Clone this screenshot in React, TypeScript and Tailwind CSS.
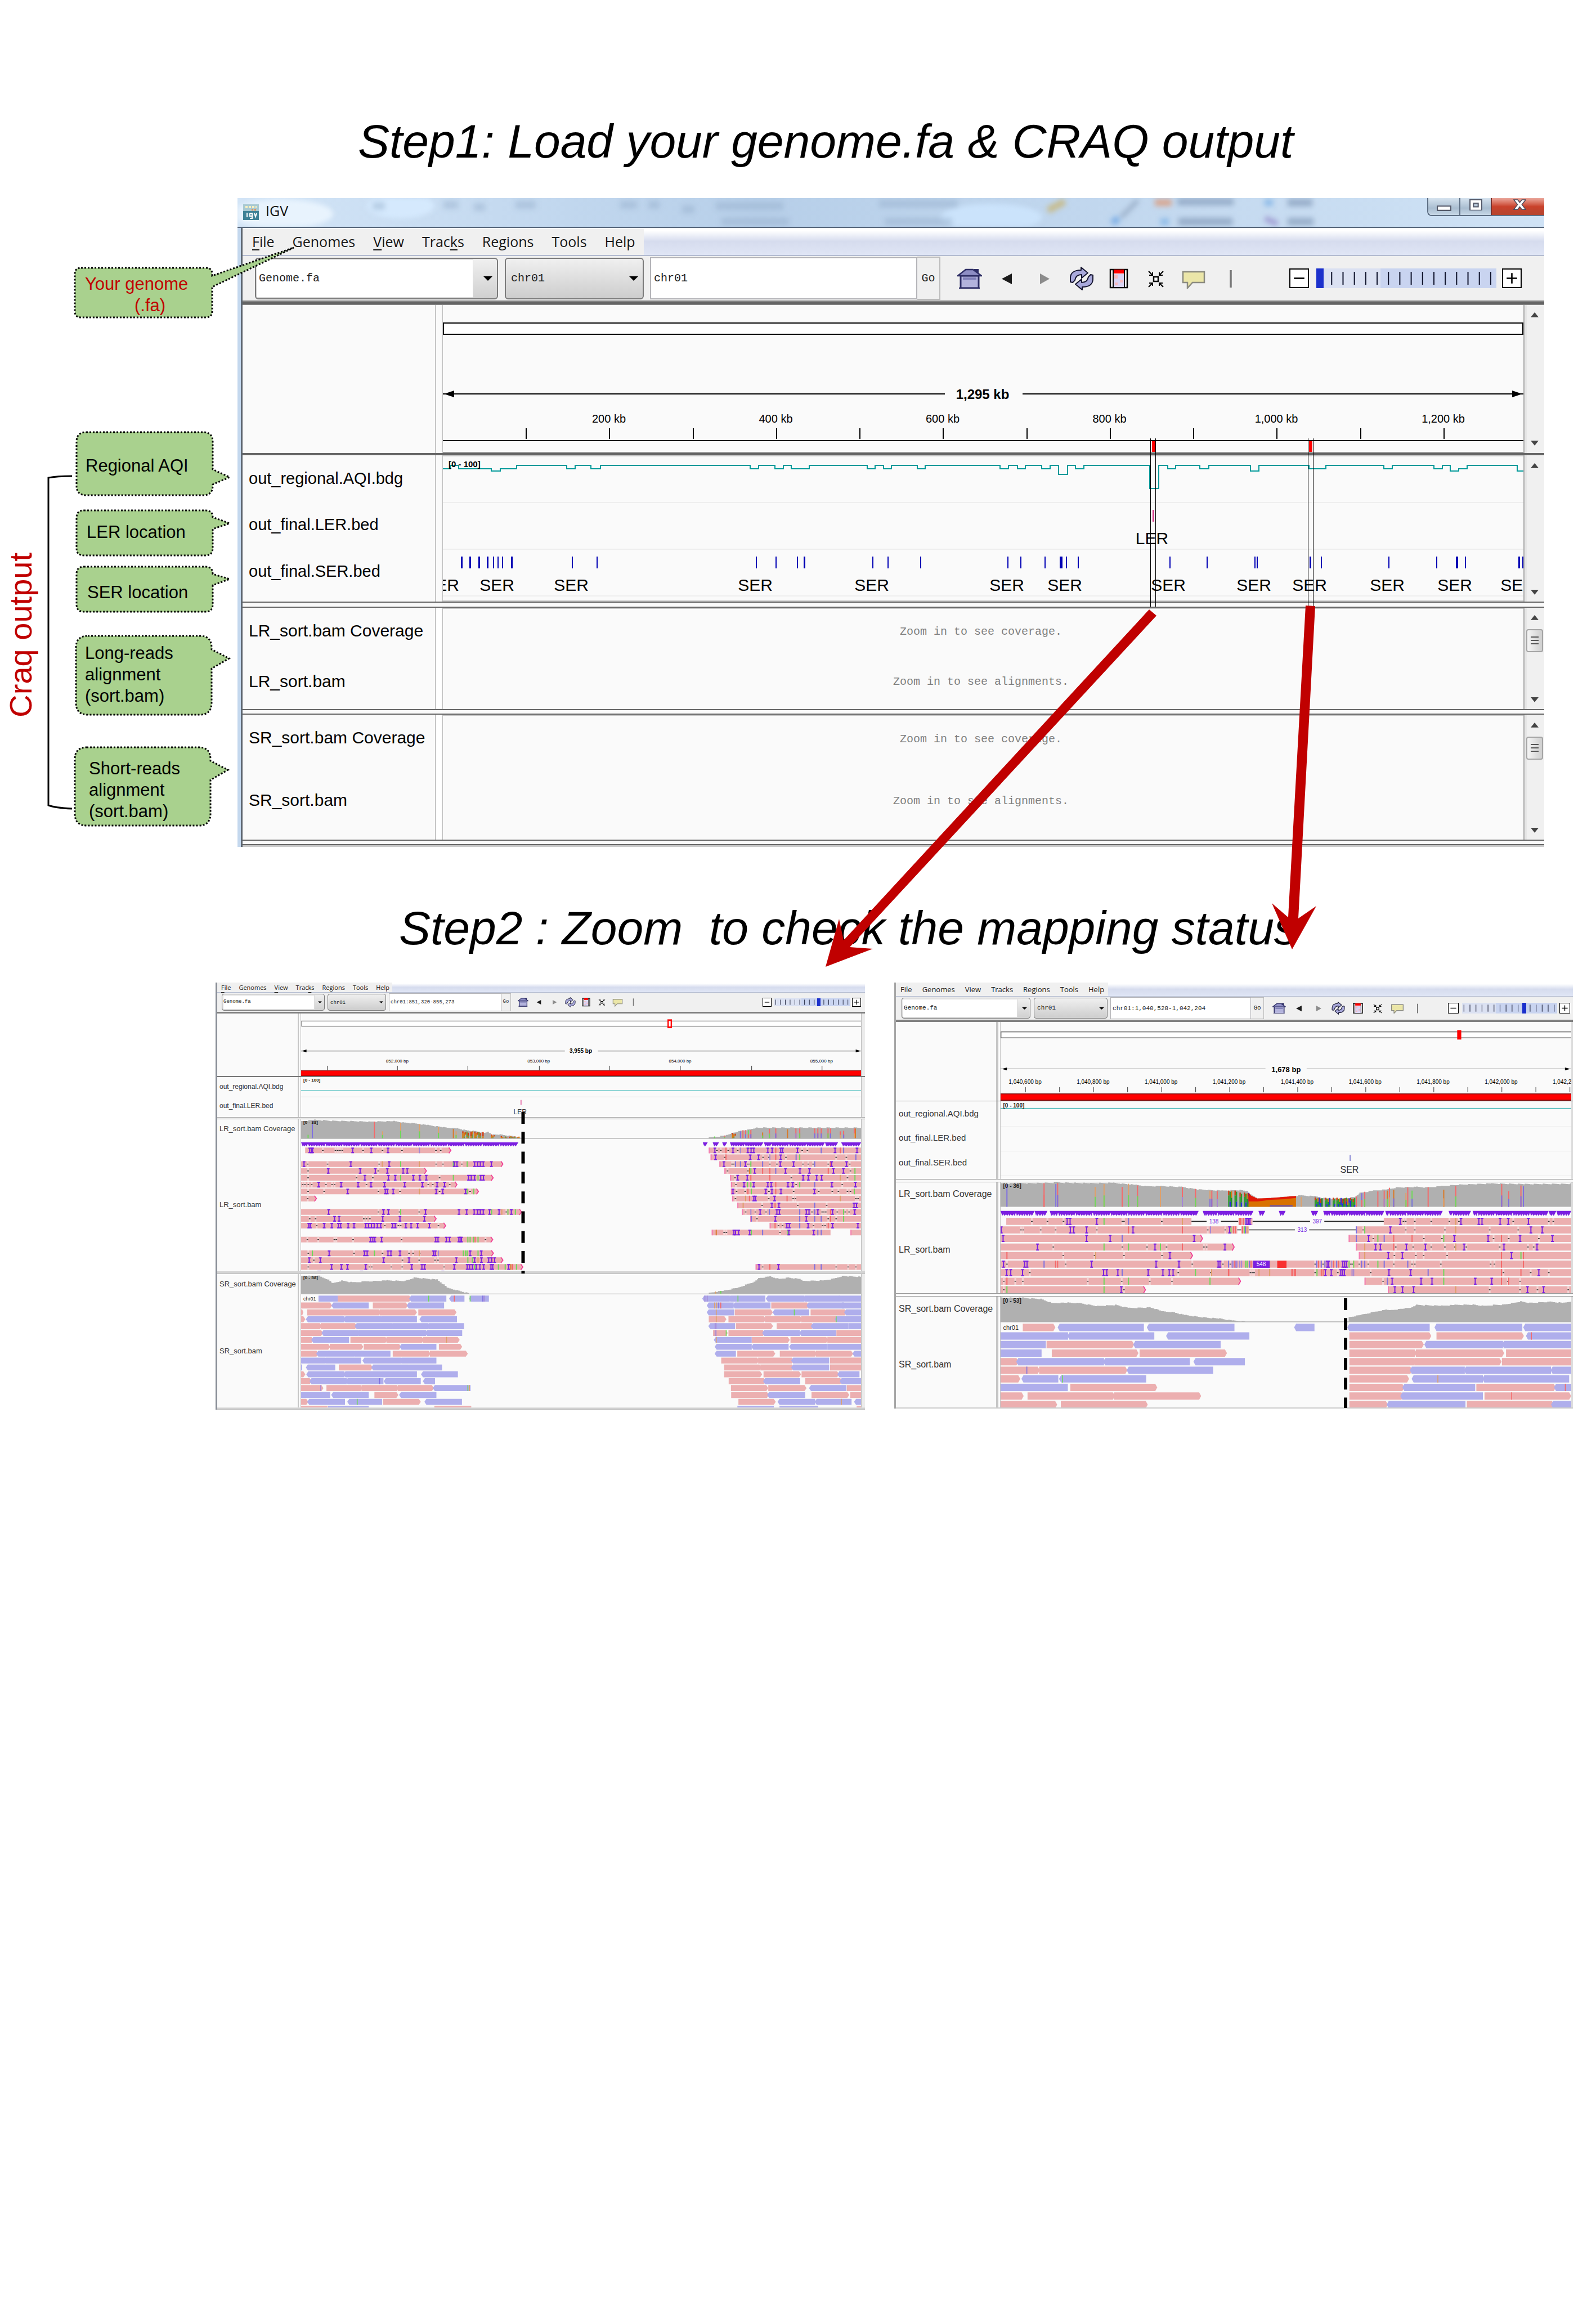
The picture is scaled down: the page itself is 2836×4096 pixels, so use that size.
import type { ReactNode } from "react";

type Read = {
  y: number;
  a: number;
  b: number;
  ins: number[];
  gaps: number[];
  marks: [string, number][];
  tip: "right" | "left" | "none";
};
type Frame = { x0: number; x1: number; y0: number; y1: number };

const PINK = "#ecafb0";
const BLUE = "#afaeec";
const INS = "#7b1fe0";
const MARK: Record<string, string> = {
  g: "#6fd85a",
  r: "#f46a6a",
  b: "#7f70e0",
  t: "#dfa06a",
  p: "#a487d6",
  o: "#d87a2a",
};
const HARD = ["#d63a10", "#2f9a2f", "#d87a10", "#2a30d8", "#c8381c", "#1f8f2a"];
const WARM = ["#d63a10", "#d87a10", "#c8501c", "#6f9a3f", "#d63a10", "#b0b0b0"];

/* ---------- read notation: "start-end tip | insertions | gaps | marks" ---------- */
function reads(off: number, rows: [number, string][]): Read[] {
  return rows.map(([y, s]) => {
    const [range, ins = "", gaps = "", marks = ""] = s.split("|").map((t) => t.trim());
    const [span, tip = ">"] = range.split(" ");
    const [a, b] = span.split("-").map(Number);
    const nums = (t: string) => (t ? t.split(" ").map((n) => Number(n) + off) : []);
    return {
      y,
      a: a + off,
      b: b + off,
      ins: nums(ins),
      gaps: nums(gaps),
      marks: marks ? marks.split(" ").map((m) => [m[0], Number(m.slice(1)) + off] as [string, number]) : [],
      tip: tip === ">" ? "right" : tip === "<" ? "left" : "none",
    };
  });
}

const A_OFF = 1442.6;
const B_OFF = 1489.6;

const longA: Read[] = [
  ...reads(0, [
    [627, "441-1085 > | 461 469 474 651 733 807 | 519 575 585 595 605 697 783 869 1019 1040 | p946"],
    [675, "423-1315 > | 436 643 812 1100 1112 1190 1203 1215 1228 1264 | 452 540 768 1020 1050 1133 | t782 g863 t946 g1096 g1157"],
    [699, "423-977 > | 543 684 751 804 874 892 | 454 764"],
    [723, "423-1272 > | 705 809 839 919 948 976 1163 1175 1190 1217 1229 | 454 668 740 1035 | g863 t946 g1096 g1205"],
    [747, "423-1112 > | 501 600 675 732 792 881 959 1024 1057 | 430 440 455 470 533 560 571 712 985 1005 1080"],
    [771, "423-1207 > | 629 795 804 830 1020 1049 1150 | 454 525 765 860 1035 1170 | t946 g1157 g1186"],
    [796, "423-491 > | | 452"],
    [843, "423-1397 > | 545 787 809 973 1121 1155 1188 1203 1215 1228 1256 1298 1352 | 765 858 945 1330 | g863 g1265 t1310 g1337 g1370"],
    [867, "423-1020 > | 571 591 784 860 968 | 461 487 700 712 727"],
    [891, "423-1062 > | 457 464 525 559 588 598 631 657 709 721 734 746 760 775 827 839 886 909 938 990 | 492 793 853 863 1030"],
    [940, "423-1270 > | 730 740 749 779 1018 1028 1065 1079 1120 1126 1132 | 451 499 570 579 653 867 1238 | g1160 g1170 g1185 r1192 g1205"],
    [988, "423-1273 > | 547 703 715 807 820 860 1008 1016 1170 1219 | 455 657 783 900 918 947 | g473 g747 t946 p1030 g1140 g1150 g1157 g1205"],
    [1012, "423-1315 > | 459 508 788 900 1109 1190 1220 1252 1264 1278 | 479 871 945 1015 1028 | g1160 g1180 t1205 r1267"],
    [1036, "423-1403 > | 558 601 628 709 912 957 969 1100 1157 1168 1180 1197 1213 1230 1262 1270 1340 | 455 725 735 822 870 1055 | g1190 g1295 g1325 o1350 r1358 g1375"],
  ]),
  ...reads(A_OFF, [
    [627, "782-1455 < | 809 889 955 969 981 1043 1062 1100 1108 1174 1340 1437 | 818 835 868 910 1195 1218 | r858 p922 r1078 b1279 r1363 b1378"],
    [651, "790-1455 < | 812 965 1002 1100 | 852 1022 1048 1123 1345 1390 | r858 p1052 r1078 b1168 g1184 b1432"],
    [675, "829-1455 < | 849 944 1098 1157 1325 1391 | 885 892 955 965 1052 1083 1198 1222 1243 1310 1405 | b900 b922 g968 b1020 b1250 r1320"],
    [699, "851-1455 < | 985 1121 1185 1227 1333 1377 | 865 955 1408 | o962 g968 r1020 r1052 b1078 r1310 g1428"],
    [723, "876-1455 < | 910 952 1199 1222 1259 1281 | 898 1147 1395 | r968 r1052 t1363 g1428"],
    [747, "880-1455 < | 938 981 1043 1058 1132 1153 1326 1430 | 902 1168 1372 | g953 g968 r1078 g1184 b1250"],
    [771, "880-1455 < | 889 1034 1061 1101 1249 | 905 943 1048 1157 1268 1328 1355 1395 1408 | r955 g970 r1078 g1425"],
    [796, "885-1455 < | 981 988 1073 | 900 1047 1155 1165 1432 1442 | t945 r962 r1128 t1363"],
    [820, "908-1455 < | 1061 1092 1424 1435 | 1018 1175 1303 | t934 r1075 b1250"],
    [843, "928-1455 < | 1009 1083 1094 1213 1225 1264 1329 1427 | 945 988 1035 1238 1283 1291 1299 1350 1385 1402 | p968 b1050 b1184 b1250 r1320 g1378"],
    [867, "965-1455 < | 1076 1213 | 995 1310 1345 | b970 b1184 b1250 b1279 r1320 g1378"],
    [891, "1051-1455 < | 1127 1138 1221 1329 1441 | 1090 1108 1245 1285 1296 | r1075 b1184 r1310"],
    [915, "795-1320 < | 893 900 914 963 1136 1246 | 850 860 1097 | o815 g970 b1020 g1132 b1264 b1279"],
    [915, "1408-1455 <"],
    [1036, "989-1455 < | 1004 1090 | 1020 1345 1398 1432 | r1052 b1250 b1279"],
  ]),
];

const longB: Read[] = [
  ...reads(0, [
    [876, "530-1348 - | 799 812 930 | 643 712 783 1043 1050 1217 | g962 b1070 t1308"],
    [906, "505-1550 - | 508 813 828 885 1090 1515 | 595 605 682 748 930 1420 1498 | r1070 r1308 p1432 g1520 r1540"],
    [936, "505-1397 > | 516 885 989 1360 | | b1042"],
    [966, "505-1537 > | 668 1187 1496 | 738 1043 1152 1238 1403 1415 | g962 g1070 g1211 r1308"],
    [996, "505-1353 > | 1253 | 782 920 1050 1218 | r533 t924"],
    [1026, "505-3026 - | 518 611 622 907 1192 1293 1466 1474 | 533 792 1352 1487 1520 | b697 r748 r757 b1512 p1528 p1543 p1549"],
    [1056, "505-3026 - | 532 550 602 960 974 1023 1157 1222 1250 1267 | 634 1290 1434 | b1042 g1366 t1437 r1513"],
    [1086, "505-1565 > | | 519 570 603 890 1040 1164 1262 | r533 g962 g1070 g1430"],
    [1116, "505-1145 > | 1038 | 519 1050 | g533 g962"],
  ]),
  ...reads(B_OFF, [
    [876, "66-128 - | 103 110 117 | | r72 r76 r88 b97"],
    [876, "708-1536 - | 781 1049 1128 1142 1222 1258 1347 | 795 805 845 918 998 1040 1280 1437 1457 | t1026"],
    [906, "0-60 - | 27 | 8 | g33 r44 r52"],
    [906, "78-112 - | | | r84 g92 b97 t104"],
    [906, "585-1536 - | 737 1358 1408 | 617 805 845 978 1176 1302 | b587 g624 t1026"],
    [936, "553-1536 < | 641 1020 1169 1310 1453 | 662 885 965 1193 1260 1393 | b587 g682 b710 r752 r833 g973 r1228"],
    [966, "585-1536 < | 672 693 808 892 1063 1239 1385 | 761 838 918 978 1022 1073 1220 1345 1370 | t624 r752 t1026"],
    [996, "598-1536 < | 728 790 1272 | 755 850 884 988 | t624 r1228 g1314 r1325"],
    [1026, "0-1 - | 458 465 527 535 543 | 405 440 562 568 600 640 752 833 845 960 1180 1197 | p42 r50 p57 p72 p80 g98 g105 b115 r122 t204 b412 r420 b432 b448 r487 p478 b500 r508 g555 g575 b610 b624 g682 b710 b814 r1228 r1325"],
    [1056, "0-1 - | 450 476 518 526 534 731 827 1393 | 119 127 135 405 505 650 1237 1357 1437 | r22 t157 t204 r302 r306 r314 r318 g413 r432 r440 p568 p575 b904 g973 r1228 r1314"],
    [1086, "623-1536 < | 745 873 921 1112 1185 | 705 1256 1310 | b724 g973 r1228 r1260"],
    [1116, "726-1536 < | 757 791 840 1343 1414 | 1176 1310 1387 1523 | t1026"],
  ]),
];

/* ---------- short reads: r = forward, b = reverse, m = coloured base ---------- */
const shortRows = (y0: number, step: number, rows: string[]) => rows.map((s, i) => [y0 + step * i, s] as [number, string]);

const shortALeft = shortRows(1147, 24.15, [
  "f500-585 r585-910 b900-1065 b1077-1145 b1165-1253 mg987 mr1100 mg1170 mb1226 mp1232",
  "r423-560 b557-722 r740-895 b890-1055",
  "r423-433 r450-620 r612-776 r770-935 r941-1110",
  "r423-442 b444-615 b610-776 b768-935 b946-1112",
  "r423-515 r510-670 b660-826 b818-985 b978-1143",
  "r423-520 b513-678 b670-815 b805-975 b970-1135",
  "r423-478 b468-635 r641-805 r800-965 r960-1124 mt1066",
  "r423-552 r550-698 r700-865 b858-1021 r1032-1135",
  "r423-500 b490-660 b652-818 r828-995 r992-1160",
  "b415-530 b522-688 b694-865 b858-1021",
  "f423-428 b444-574 r590-740 b733-900 b892-1046",
  "r423-442 b446-615 b610-776 b768-935 b953-1116",
  "r423-470 b460-625 b620-787 b788-952 b961-1015 mb770",
  "r423-522 r535-695 r690-855 r850-1010 b1005-1172 mp510 mg1160 mt1167",
  "f423-552 b556-722 r747-853 b856-1021",
  "r423-455 b450-617 b627-781 r785-952 b968-1134 mg671",
]);
const shortARight = shortRows(1147, 24.15, [
  "b753-875 b868-1032 b1034-1205 b1198-1360 f1357-1455 mp765 mp775 mg911",
  "b773-892 b888-1055 r1058-1225 b1214-1380 f1370-1455 mt808 mt817 mb826 mr835",
  "b773-894 r897-1065 b1064-1226 r1232-1392 b1380-1455 mg1160 mt815",
  "r782-860 r869-1035 r1030-1195 r1190-1352 b1338-1455 mt815 mg1345",
  "b780-898 r902-1066 r1082-1246 b1233-1400 f1402-1455 mp810 mp814",
  "r801-866 r869-1030 b1018-1185 b1182-1345 f1345-1345 q1346-1455 mp810 mp814 mg859",
  "b804-972 r972-1140 r1143-1310 q1306-1455 mt815",
  "b808-972 b970-1135 b1137-1305 f1306-1455",
  "b808-902 r908-1076 r1096-1260 r1255-1420 b1417-1455",
  "r837-1005 r1000-1158 b1146-1314 q1318-1455",
  "r850-1015 r1010-1158 b1146-1314 q1318-1455",
  "r850-1018 r1024-1190 r1192-1358 b1350-1448",
  "r870-1035 b1022-1186 r1208-1372 b1360-1455",
  "r880-1045 r1045-1214 b1225-1390 q1392-1455",
  "r881-1048 b1040-1208 r1236-1403 q1407-1455",
  "r913-1078 b1086-1252 b1250-1413 b1424-1455 mt1368",
]);
const shortBLeft = shortRows(1248, 30.1, [
  "r603-747 b757-1138 b1151-1538",
  "f505-803 b800-1184 b1236-1604",
  "f505-705 r708-1095 b1091-1477",
  "f505-686 r731-1114 r1119-1505",
  "r505-584 b574-962 b958-1341 b1357-1584",
  "r505-678 r675-1065 b1062-1444 mb621",
  "r505-592 b597-760 b763-1148 mg778",
  "f505-802 r813-1197",
  "r505-607 r624-1010 r1006-1391",
  "r505-755 r771-1155",
]);
const shortBRight = shortRows(1248, 30.1, [
  "b312-402 b547-911 b932-1320 b1324-1536",
  "r556-918 r941-1327 b1336-1536 mr1360",
  "r556-885 b887-1235 b1230-1536",
  "r556-854 r850-1240 q1248-1536",
  "r556-850 r843-1228 q1230-1536",
  "r556-834 b823-1066 b1062-1447 b1445-1536",
  "r556-820 b831-1146 b1143-1527 mt947",
  "r556-799 b790-1112 r1117-1468 b1460-1536 mr1510",
  "r556-795 b781-1146 r1153-1536 mr1273",
  "r556-726 b721-1069 r1075-1460 b1447-1536",
]);

function LongReads({ data, h }: { data: Read[]; h: number }) {
  return (
    <g>
      {data.map((r, i) => {
        const t = r.y - h / 2;
        const w = Math.max(r.b - r.a, 0);
        const tipW = 9;
        return (
          <g key={i}>
            {w > 2 && r.tip === "right" && (
              <>
                <path d={`M${r.a} ${t}H${r.b - tipW}L${r.b} ${r.y}L${r.b - tipW} ${t + h}H${r.a}Z`} fill={PINK} />
                <path d={`M${r.b - tipW} ${t}L${r.b} ${r.y}L${r.b - tipW} ${t + h}`} fill="none" stroke="#f23d96" strokeWidth={4} />
              </>
            )}
            {w > 2 && r.tip !== "right" && <rect x={r.a} y={t} width={w} height={h} fill={PINK} />}
            {r.tip === "left" && <rect x={r.a} y={t} width={5} height={h} fill="#f57fb4" />}
            {r.gaps.map((x) => (
              <g key={x}>
                <rect x={x - 4} y={t} width={8} height={h} fill="#f3d3d3" />
                <rect x={x - 3.5} y={r.y - 1.5} width={7} height={3} fill="#333" />
              </g>
            ))}
            {r.marks.map(([c, x]) => (
              <rect key={c + x} x={x - 2.5} y={t} width={5} height={h} fill={MARK[c]} />
            ))}
            {r.ins.map((x) => (
              <path
                key={x}
                d={`M${x - 6} ${t}H${x + 6}V${t + 4}H${x + 2.5}V${t + h - 4}H${x + 6}V${t + h}H${x - 6}V${t + h - 4}H${x - 2.5}V${t + 4}H${x - 6}Z`}
                fill={INS}
              />
            ))}
          </g>
        );
      })}
    </g>
  );
}

function ShortReads({ rows, off, h }: { rows: [number, string][]; off: number; h: number }) {
  return (
    <g>
      {rows.map(([y, s]) =>
        s.split(" ").map((tok) => {
          const t = y - h / 2;
          if (tok[0] === "m") {
            const x = Number(tok.slice(2)) + off;
            return <rect key={y + tok} x={x - 2} y={t} width={4} height={h} fill={MARK[tok[1]]} />;
          }
          const [a, b] = tok.slice(1).split("-").map((n) => Number(n) + off);
          if (tok[0] === "f" || tok[0] === "q")
            return <rect key={y + tok} x={a} y={t} width={b - a} height={h} fill={tok[0] === "f" ? BLUE : PINK} />;
          const k = Math.min(9, (b - a) / 2);
          const d =
            tok[0] === "r"
              ? `M${a} ${t}H${b - k}L${b} ${y}L${b - k} ${t + h}H${a}Z`
              : `M${b} ${t}H${a + k}L${a} ${y}L${a + k} ${t + h}H${b}Z`;
          return <path key={y + tok} d={d} fill={tok[0] === "r" ? PINK : BLUE} />;
        }),
      )}
    </g>
  );
}

/* area with a stepped, slightly uneven crest */
function Coverage({ base, pts }: { base: number; pts: [number, number][] }) {
  let d = `M${pts[0][0]} ${base}`;
  for (let i = 0; i < pts.length - 1; i++) {
    const [xa, ya] = pts[i];
    const [xb, yb] = pts[i + 1];
    for (let x = xa; x < xb; x += 8) {
      const y = ya + ((yb - ya) * (x - xa)) / (xb - xa) + ((Math.round(x) * 7) % 5) * 0.6 - 1;
      d += `L${x} ${y.toFixed(1)}H${Math.min(x + 8, xb)}`;
    }
  }
  d += `V${base}Z`;
  return <path d={d} fill="#b0b0b0" />;
}

function Bars({ base, off = 0, items }: { base: number; off?: number; items: [number, number, string, string?][] }) {
  return (
    <g>
      {items.map(([x, top, c, c2]) => (
        <g key={x}>
          <rect x={x + off - 2.5} y={top} width={5} height={base - top} fill={MARK[c]} />
          {c2 && <rect x={x + off - 2.5} y={(top + base) / 2} width={5} height={(base - top) / 2} fill={MARK[c2]} />}
        </g>
      ))}
    </g>
  );
}

function Mix({ a, b, top, base, step = 6, tones = HARD }: { a: number; b: number; top: number; base: number; step?: number; tones?: string[] }) {
  const out: ReactNode[] = [];
  let i = 0;
  for (let x = a; x < b; x += step, i++) {
    const j = top + ((i * 5) % 7) * 0.8;
    const m = j + (base - j) * (0.3 + ((i * 3) % 5) * 0.12);
    out.push(<rect key={"u" + i} x={x} y={j} width={step} height={m - j} fill={tones[i % 6]} />);
    out.push(<rect key={"d" + i} x={x} y={m} width={step} height={base - m} fill={tones[(i * 2 + 1) % 6]} />);
  }
  return <g>{out}</g>;
}

function PurpleBand({ y, h, segs }: { y: number; h: number; segs: [number, number][] }) {
  return (
    <path
      fill={INS}
      d={segs
        .map(([a, b]) => {
          let d = `M${a} ${y}H${b}L${b - 6} ${y + h * 0.55}`;
          let x = b - 6;
          let k = 0;
          while (x > a + 14) {
            x -= 6;
            d += `L${x} ${y + h}`;
            x -= 4 + (k % 3);
            d += `L${x} ${y + h * (k % 7 === 6 ? 0.35 : 0.65)}`;
            k++;
          }
          return d + `L${(a + Math.min(b, a + 14)) / 2} ${y + h}Z`;
        })
        .join("")}
    />
  );
}

function Plot({ frame, children }: { frame: Frame; children: ReactNode }) {
  return (
    <svg
      className="absolute inset-0 h-full w-full"
      viewBox={`${frame.x0} ${frame.y0} ${frame.x1 - frame.x0} ${frame.y1 - frame.y0}`}
      preserveAspectRatio="none"
      aria-hidden="true"
    >
      {children}
    </svg>
  );
}

function At({ frame, x, y, className = "", start = false, children }: { frame: Frame; x: number; y: number; className?: string; start?: boolean; children: ReactNode }) {
  return (
    <span
      className={`absolute -translate-y-1/2 leading-none whitespace-nowrap ${start ? "" : "-translate-x-1/2"} ${className}`}
      style={{
        left: `${((x - frame.x0) / (frame.x1 - frame.x0)) * 100}%`,
        top: `${((y - frame.y0) / (frame.y1 - frame.y0)) * 100}%`,
      }}
    >
      {children}
    </span>
  );
}

/* ---------- toolbar icons ---------- */
const HomeIcon = () => (
  <svg viewBox="0 0 44 36" className="w-full" aria-hidden="true">
    <path d="M6 13H38V35H6Z" fill="#b3b3dc" stroke="#2f2f66" strokeWidth="3" />
    <path d="M10 16H34V20H10Z" fill="#8080b8" />
    <path d="M30 1H38V10H30Z" fill="#2f2f66" />
    <path d="M1 13L15 2H28L43 13Z" fill="#8e8ec4" stroke="#2f2f66" strokeWidth="2.5" />
    <path d="M3 35H40" stroke="#2f2f66" strokeWidth="2.5" />
  </svg>
);
const BackIcon = () => (
  <svg viewBox="0 0 44 36" className="w-full" aria-hidden="true">
    <path d="M31 9V28L13 18.500Z" fill="#1c1c1c" />
  </svg>
);
const ForwardIcon = () => (
  <svg viewBox="0 0 44 36" className="w-full" aria-hidden="true">
    <path d="M14 9V28L31 18.500Z" fill="#8c8c8c" />
  </svg>
);
const RefreshIcon = () => (
  <svg viewBox="0 0 44 42" className="w-full" aria-hidden="true">
    <g fill="#a9a9dc" stroke="#14142e" strokeWidth="2" strokeLinejoin="round">
      <path d="M2 27V20C2 11 9 6 21 6V1L33 11L22 20V14C14 14 11 18 10 24L6 28Z" />
      <path d="M42 15V22C42 31 35 36 23 36V41L11 31L22 22V28C30 28 33 24 34 18L38 14Z" />
    </g>
  </svg>
);
const RegionIcon = () => (
  <svg viewBox="0 0 44 36" className="w-full" aria-hidden="true">
    <path d="M7 2H37V34H7Z" fill="#fff" stroke="#000" strokeWidth="2.500" />
    <path d="M12 10H32V33H12Z" fill="#d9d4f4" />
    <path d="M14 12H20V18H14ZM24 20H30V25H24ZM15 25H20V30H15Z" fill="#f6b9bd" />
    <path d="M13 2H31V9H13Z" fill="#f00" />
    <path d="M12 2V34M32 2V34" stroke="#000" strokeWidth="2" />
  </svg>
);
const CollapseIcon = () => (
  <svg viewBox="0 0 44 36" className="w-full" aria-hidden="true">
    <path d="M18 15H26V23H18Z" fill="#fff" stroke="#000" strokeWidth="2.500" />
    <path d="M9 5L16 12M35 5L28 12M9 33L16 26M35 33L28 26M16 7V12H10M28 7V12H34M16 31V26H10M28 31V26H34" fill="none" stroke="#000" strokeWidth="2" />
  </svg>
);
const NoteIcon = () => (
  <svg viewBox="0 0 44 36" className="w-full" aria-hidden="true">
    <path d="M3 6H41V25H20L11 35V25H3Z" fill="#ebe6a8" stroke="#8b8b80" strokeWidth="2.500" />
  </svg>
);
const BarIcon = () => (
  <svg viewBox="0 0 44 36" className="w-full" aria-hidden="true">
    <path d="M22 3V34" stroke="#777" strokeWidth="3.500" />
  </svg>
);
const tools: [string, () => ReactNode][] = [
  ["Home", HomeIcon],
  ["Back", BackIcon],
  ["Forward", ForwardIcon],
  ["Refresh", RefreshIcon],
  ["Define region", RegionIcon],
  ["Fit to window", CollapseIcon],
  ["Popup text", NoteIcon],
  ["Ruler", BarIcon],
];

/* ---------- size variants of the viewer chrome ---------- */
type Skin = {
  menuBar: string;
  menu: string;
  toolbar: string;
  mono: string;
  genome: string;
  genomeField: string;
  chrom: string;
  locus: string;
  go: string;
  tools: string;
  icon: string;
  zoomBtn: string;
  zoomWrap: string;
  zoomTrack: string;
  range: string;
  arrow: string;
  names: string;
  gutter: string;
};

const big: Skin = {
  menuBar: "h-[50px] border-b-2",
  menu: "gap-[32px] pl-[17px] pr-[15px] pb-[2px] text-[25px] border-t-2",
  toolbar: "h-[79px] pl-[22px]",
  mono: "text-[20px]",
  genome: "w-[432px] h-[74px] rounded-md border-2",
  genomeField: "pl-[5px] pr-10",
  chrom: "ml-[12px] w-[247px] h-[74px] rounded-md border-2 pl-[9px]",
  locus: "ml-[11px] w-[475px] h-[75px] border-2 pl-[5px]",
  go: "w-[41px] h-[77px] border-2",
  tools: "ml-[19px] w-[530px]",
  icon: "w-[44px]",
  zoomBtn: "size-[35px] border-2",
  zoomWrap: "pr-[40px] gap-[10px]",
  zoomTrack: "w-[323px] h-[35px]",
  range:
    "mx-[3px] w-[317px] [&::-webkit-slider-thumb]:h-[35px] [&::-webkit-slider-thumb]:w-[13px]",
  arrow: "right-[8px] w-[16px]",
  names: "w-[342px]",
  gutter: "w-[14px] border-l-2 border-r-2",
};
const smallA: Skin = {
  menuBar: "h-[18px] border-b",
  menu: "gap-[14px] pl-[7px] pr-[5px] text-[11px]",
  toolbar: "h-[34px] pl-[8px]",
  mono: "text-[9px]",
  genome: "w-[183px] h-[30px] rounded-sm border",
  genomeField: "pl-[2px] pr-4",
  chrom: "ml-[5px] w-[104px] h-[30px] rounded-sm border pl-[4px]",
  locus: "ml-[5px] w-[200px] h-[32px] border pl-[2px]",
  go: "w-[17px] h-[32px] border",
  tools: "ml-[7px] w-[225px]",
  icon: "w-[19px]",
  zoomBtn: "size-[16px] border",
  zoomWrap: "pr-[7px] gap-[3px]",
  zoomTrack: "w-[137px] h-[14px]",
  range:
    "mx-px w-[135px] [&::-webkit-slider-thumb]:h-[14px] [&::-webkit-slider-thumb]:w-[6px]",
  arrow: "right-[4px] w-[7px]",
  names: "w-[143px]",
  gutter: "w-[6px] border-l-2 border-r",
};
const smallB: Skin = {
  menuBar: "h-[25px] border-b",
  menu: "gap-[18px] pl-[8px] pr-[7px] text-[13px]",
  toolbar: "h-[41px] pl-[10px]",
  mono: "text-[11px]",
  genome: "w-[229px] h-[37px] rounded-sm border",
  genomeField: "pl-[3px] pr-5",
  chrom: "ml-[6px] w-[131px] h-[37px] rounded-sm border pl-[5px]",
  locus: "ml-[5px] w-[250px] h-[39px] border pl-[3px]",
  go: "w-[23px] h-[39px] border",
  tools: "ml-[9px] w-[281px]",
  icon: "w-[24px]",
  zoomBtn: "size-[19px] border",
  zoomWrap: "pr-[5px] gap-[4px]",
  zoomTrack: "w-[171px] h-[19px]",
  range:
    "mx-[2px] w-[167px] [&::-webkit-slider-thumb]:h-[19px] [&::-webkit-slider-thumb]:w-[7px]",
  arrow: "right-[5px] w-[9px]",
  names: "w-[178px]",
  gutter: "w-[8px] border-l-4 border-r",
};

const mono = "[font-family:'Liberation_Mono',monospace]";
const ui = "[font-family:'Open_Sans','Noto_Sans',sans-serif]";

function MenuBar({ skin, underline }: { skin: Skin; underline: boolean }) {
  const items = ["File", "Genomes", "View", "Tracks", "Regions", "Tools", "Help"];
  const key: Record<string, number> = { File: 0, View: 0, Tracks: 4 };
  return (
    <nav className={`flex border-[#b3bbd0] bg-gradient-to-b from-white from-10% via-[#d6dcee] via-50% to-[#dfe5f5] ${skin.menuBar}`}>
      <div className={`flex items-center border-white bg-[#f0f0f0] text-[#161616] ${ui} ${skin.menu}`}>
        {items.map((m) => {
          const k = key[m];
          return (
            <button key={m} type="button" className="leading-none">
              {underline && k !== undefined ? (
                <>
                  {m.slice(0, k)}
                  <span className="underline underline-offset-4">{m[k]}</span>
                  {m.slice(k + 1)}
                </>
              ) : (
                m
              )}
            </button>
          );
        })}
      </div>
    </nav>
  );
}

function Toolbar({ skin, locus, zoom }: { skin: Skin; locus: string; zoom: number }) {
  const caret = (
    <svg viewBox="0 0 16 8" className={`pointer-events-none absolute top-1/2 -translate-y-1/2 ${skin.arrow}`} aria-hidden="true">
      <path d="M0 0H16L8 8Z" fill="#000" />
    </svg>
  );
  return (
    <div className={`flex items-center bg-[#f0f0f0] text-[#222] ${skin.toolbar}`}>
      <div className={`relative flex shrink-0 overflow-hidden border-[#7a7a7a] bg-gradient-to-b from-[#f0f0f0] to-[#d0d0d0] ${skin.genome}`}>
        <div className="my-px ml-px w-[90%] border border-[#ddd] bg-white" />
        <select aria-label="Genome" className={`absolute inset-0 h-full w-full appearance-none bg-transparent ${mono} ${skin.mono} ${skin.genomeField}`}>
          <option>Genome.fa</option>
        </select>
        {caret}
      </div>
      <div className={`relative shrink-0 border-[#7a7a7a] bg-gradient-to-b from-[#f0f0f0] to-[#cdcdcd] ${skin.chrom}`}>
        <select aria-label="Chromosome" className={`h-full w-full appearance-none bg-transparent ${mono} ${skin.mono}`}>
          <option>chr01</option>
        </select>
        {caret}
      </div>
      <input aria-label="Locus" defaultValue={locus} className={`shrink-0 border-[#b4b4b8] bg-white ${mono} ${skin.mono} ${skin.locus}`} />
      <button type="button" className={`shrink-0 border-l-0 border-[#bcbcbc] ${mono} ${skin.mono} ${skin.go}`}>
        Go
      </button>
      <div className={`grid shrink-0 grid-cols-8 items-center justify-items-center ${skin.tools}`}>
        {tools.map(([name, Icon]) => (
          <button key={name} type="button" aria-label={name} className={skin.icon}>
            <Icon />
          </button>
        ))}
      </div>
      <div className={`ml-auto flex items-center ${skin.zoomWrap}`}>
        <button type="button" aria-label="Zoom out" className={`border-black bg-white ${skin.zoomBtn}`}>
          <svg viewBox="0 0 30 30" aria-hidden="true">
            <path d="M6 15H24" stroke="#000" strokeWidth="2.500" />
          </svg>
        </button>
        <div className={`relative ${skin.zoomTrack}`}>
          <svg className="absolute inset-0 h-full w-full" viewBox="0 0 320 35" preserveAspectRatio="none" aria-hidden="true">
            <rect x="4" width="112" height="35" fill="#dbe1f2" />
            <rect x="116" width="204" height="35" fill="#c9d4f0" />
            {Array.from({ length: 16 }, (_, i) => (
              <rect key={i} x={i * 20 + 9} y="6" width="2" height="23" fill="#10142c" />
            ))}
          </svg>
          <input
            type="range"
            aria-label="Zoom"
            min={0}
            max={15}
            defaultValue={zoom}
            className={`relative block h-full appearance-none bg-transparent [&::-webkit-slider-thumb]:appearance-none [&::-webkit-slider-thumb]:bg-[#1b30cc] ${skin.range}`}
          />
        </div>
        <button type="button" aria-label="Zoom in" className={`border-black bg-white ${skin.zoomBtn}`}>
          <svg viewBox="0 0 30 30" aria-hidden="true">
            <path d="M6 15H24M15 6V24" stroke="#000" strokeWidth="2.500" />
          </svg>
        </button>
      </div>
    </div>
  );
}

function Pane({ skin, height, names, children, side, tone = "bg-[#fafafa]" }: { skin: Skin; height: string; names?: ReactNode; children: ReactNode; side: ReactNode; tone?: string }) {
  return (
    <div className={`flex bg-[#fafafa] ${height}`}>
      <div className={`flex shrink-0 flex-col bg-[#fafafa] ${skin.names}`}>{names}</div>
      <div className={`shrink-0 border-[#c6c6c6] ${skin.gutter} ${tone}`} />
      <div className="relative min-w-0 flex-1 overflow-hidden">{children}</div>
      {side}
    </div>
  );
}

const Name = ({ h, className, children }: { h: string; className: string; children: ReactNode }) => (
  <div className={`flex items-center leading-none whitespace-nowrap ${h} ${className}`}>{children}</div>
);

/* ---------- large viewer ---------- */
const X0 = 787;
const X1 = 2707;
const HI = 827;
const MID = 833;
const LOW = 837;
const aqi: [number, number][] = [
  [787, MID], [800, HI], [815, MID], [873, LOW], [889, MID], [918, HI], [1007, MID], [1022, HI], [1050, MID], [1067, HI],
  [1333, MID], [1348, HI], [1377, MID], [1392, HI], [1406, MID], [1438, HI], [1541, MID], [1555, HI], [1570, MID], [1584, HI],
  [1630, MID], [1644, HI], [1777, MID], [1792, HI], [1808, MID], [1822, HI], [1851, MID], [1866, HI], [1881, 843], [1897, HI],
  [1911, MID], [1926, HI], [2043, 868], [2059, HI], [2075, MID], [2089, HI], [2132, MID], [2148, HI], [2222, LOW], [2237, HI],
  [2326, MID], [2356, HI], [2459, MID], [2474, HI], [2548, MID], [2563, HI], [2577, LOW], [2592, MID], [2607, HI], [2696, LOW],
];
const serTicks: [number, number][] = [
  [819, 3], [834, 3], [850, 3], [865, 3], [876, 2], [884, 2], [892, 2], [908, 3], [1016, 2], [1060, 2], [1343, 2], [1378, 2],
  [1416, 2], [1428, 3], [1550, 2], [1577, 2], [1635, 2], [1790, 2], [1813, 2], [1856, 2], [1883, 5], [1894, 2], [1915, 2],
  [2078, 2], [2144, 2], [2229, 2], [2233, 2], [2327, 3], [2347, 2], [2467, 2], [2552, 2], [2587, 4], [2603, 2], [2698, 3], [2705, 2],
];
const serLabels = [785, 883, 1015, 1342, 1549, 1789, 1892, 2076, 2228, 2327, 2465, 2585, 2697];

function Scroll({ thumb = false, pad }: { thumb?: boolean; pad: string }) {
  return (
    <div className="w-[37px] shrink-0 border-l-2 border-[#aaa]">
      <div className={`flex h-full flex-col items-center border-l-4 border-[#e6e6e6] bg-[#f0f0f0] pr-[3px] ${pad}`}>
        <svg viewBox="0 0 16 10" className="w-[14px]" aria-hidden="true">
          <path d="M8 0L16 10H0Z" fill="#444" />
        </svg>
        {thumb && (
          <div className="mt-[16px] flex h-[41px] w-[30px] flex-col items-center justify-center gap-[4px] rounded-sm border-2 border-[#a5a5a5] bg-gradient-to-r from-[#f5f5f5] to-[#cfcfcf]">
            <div className="h-[2px] w-[14px] bg-[#555]" />
            <div className="h-[2px] w-[14px] bg-[#555]" />
            <div className="h-[2px] w-[14px] bg-[#555]" />
          </div>
        )}
        <svg viewBox="0 0 16 10" className="mt-auto w-[14px]" aria-hidden="true">
          <path d="M8 10L16 0H0Z" fill="#444" />
        </svg>
      </div>
    </div>
  );
}

function MainViewer() {
  const head: Frame = { x0: X0, x1: X1, y0: 542, y1: 805 };
  const one: Frame = { x0: X0, x1: X1, y0: 809, y1: 1069 };
  const msg = `flex items-center justify-center pr-2 text-[20px] leading-none text-[#808080] ${mono}`;
  return (
    <section className="flex min-w-0 flex-1 flex-col">
      <header className="relative flex h-[53px] overflow-hidden border-b-2 border-[#56667a] bg-gradient-to-r from-[#d3e5f7] via-[#b7cfe9] via-40% to-[#cfe2f5]">
        <svg className="absolute inset-0 h-full w-full blur-[5px]" viewBox="0 0 2322 51" preserveAspectRatio="none" aria-hidden="true">
          <ellipse cx="80" cy="28" rx="90" ry="26" fill="#e8f3fd" />
          <ellipse cx="290" cy="14" rx="60" ry="22" fill="#d5e9fd" />
          <ellipse cx="1340" cy="34" rx="90" ry="24" fill="#cbe3fb" />
          <path d="M240 14H262M366 12H392M420 16H440M494 12H530M680 12H710M730 12H750M790 20H812M850 14H970M860 42H980M1140 10H1280M1150 42H1270" stroke="#8fa9c6" strokeWidth="14" opacity="0.4" />
          <path d="M1440 22L1470 6" stroke="#c9b676" strokeWidth="12" opacity="0.8" />
          <path d="M1554 44L1566 36" stroke="#7fb0e6" strokeWidth="12" />
          <path d="M1570 34L1600 4" stroke="#8ea3bd" strokeWidth="8" opacity="0.7" />
          <path d="M1630 8H1660" stroke="#d8a690" strokeWidth="12" />
          <path d="M1640 42H1655M1825 8H1840" stroke="#8fbce8" strokeWidth="12" />
          <path d="M1826 36L1848 46" stroke="#a2a0d4" strokeWidth="10" />
          <path d="M1670 6H1770M1672 42H1768M1866 8H1910M1866 42H1912" stroke="#7c93b2" strokeWidth="14" opacity="0.6" />
        </svg>
        <div className="relative flex items-center gap-[12px] pb-[6px] pl-[10px]">
          <svg viewBox="0 0 28 28" className="mt-[4px] w-[28px]" aria-hidden="true">
            <rect width="28" height="28" fill="#3f8296" />
            <rect width="28" height="12" fill="#a9c9d2" />
            <path d="M4 5H24" stroke="#f5efc0" strokeWidth="4" strokeDasharray="4 2" />
            <path d="M15 10H24" stroke="#e68a4a" strokeWidth="2.500" strokeDasharray="3 2" />
            <path d="M7 15V23M12 16H16V25H12M12 16V21H16M20 16L22 22L24 16" fill="none" stroke="#fff" strokeWidth="2" />
          </svg>
          <h2 className={`text-[25px] leading-none text-[#111] ${ui}`}>IGV</h2>
        </div>
        <div className="relative ml-auto flex h-[32px] overflow-hidden rounded-bl-lg border-b-2 border-l-2 border-[#5e6f84]">
          <button type="button" aria-label="Minimize" className="flex w-[57px] items-center justify-center border-r-2 border-[#5e6f84] bg-gradient-to-b from-[#d6e3ef] via-[#a9bdd0] via-60% to-[#c6d7e6]">
            <svg viewBox="0 0 24 12" className="mt-1 w-[26px]" aria-hidden="true">
              <path d="M1 3H23V10H1Z" fill="#fff" stroke="#555a6a" strokeWidth="2" />
            </svg>
          </button>
          <button type="button" aria-label="Maximize" className="flex w-[56px] items-center justify-center border-r-2 border-[#7c2f2a] bg-gradient-to-b from-[#d6e3ef] via-[#a9bdd0] via-60% to-[#c6d7e6] pb-[6px]">
            <svg viewBox="0 0 24 20" className="w-[25px]" aria-hidden="true">
              <path d="M2 1H22V19H2Z" fill="#fff" stroke="#555a6a" strokeWidth="2" />
              <path d="M8 7H16V13H8Z" fill="#b8c8d8" stroke="#555a6a" strokeWidth="2" />
            </svg>
          </button>
          <button type="button" aria-label="Close" className="flex w-[93px] items-center justify-center bg-gradient-to-b from-[#eaa79c] via-[#c9412b] via-50% to-[#b5452f] pb-[6px] pl-[6px]">
            <svg viewBox="0 0 24 20" className="w-[23px]" aria-hidden="true">
              <path d="M1 1H8L12 6L16 1H23L16 10L23 19H16L12 14L8 19H1L8 10Z" fill="#fff" stroke="#4b4b5c" strokeWidth="1.500" />
            </svg>
          </button>
        </div>
      </header>
      <div className="border-l-6 border-[#c4d8ee]">
        <div className="border-l-3 border-[#5d6670]">
          <MenuBar skin={big} underline />
          <Toolbar skin={big} locus="chr01" zoom={0} />
          <div className="h-2 border-b-2 border-[#808080] bg-gradient-to-b from-[#808080] from-50% to-[#666] to-50%" />
          <Pane skin={big} height="h-[263px]" side={<Scroll pad="pt-[13px] pb-[13px]" />}>
            <Plot frame={head}>
              <rect x={788} y={574} width={1918} height={20} fill="#fff" stroke="#000" strokeWidth={2} />
              <path d="M787 700H1679M1817 700H2707" stroke="#000" strokeWidth={2} />
              <path d="M789 700L807 694V706ZM2705 700L2687 694V706Z" fill="#000" />
              {Array.from({ length: 12 }, (_, i) => (
                <rect key={i} x={Math.round(934 + i * 148.26)} y={761} width={2} height={19} fill="#000" />
              ))}
              <rect x={787} y={782} width={1920} height={2} fill="#000" />
              <rect x={2047} y={784} width={6} height={19} fill="#f00" />
              <rect x={2326} y={784} width={6} height={19} fill="#f00" />
              <path d="M787 804H2707" stroke="#999" strokeWidth={2} />
            </Plot>
            <At frame={head} x={1746} y={701} className="text-[24px] font-bold">1,295 kb</At>
            {["200 kb", "400 kb", "600 kb", "800 kb", "1,000 kb", "1,200 kb"].map((t, i) => (
              <At key={t} frame={head} x={1082 + i * 296.5} y={744} className="text-[20px]">
                {t}
              </At>
            ))}
          </Pane>
          <div className="h-1 bg-[#666]" />
          <Pane
            skin={big}
            height="h-[260px]"
            side={<Scroll pad="pt-[14px] pb-[12px]" />}
            names={
              <>
                <Name h="h-[82px]" className="pl-[11px] text-[29px]">out_regional.AQI.bdg</Name>
                <Name h="h-[83px]" className="pl-[11px] text-[29px]">out_final.LER.bed</Name>
                <Name h="h-[83px]" className="pl-[11px] text-[29px]">out_final.SER.bed</Name>
              </>
            }
          >
            <Plot frame={one}>
              <path d="M787 810H2707M787 1068H2707" stroke="#c8c8c8" strokeWidth={2} />
              <path d="M787 893H2707M787 976H2707M787 1059H2707" stroke="#eee" strokeWidth={2} />
              <path
                d={aqi.map(([x, y], i) => (i ? `H${x}V${y}` : `M${x} ${y}`)).join("") + "H2707"}
                fill="none"
                stroke="#009999"
                strokeWidth={2}
              />
              <rect x={2048} y={906} width={2} height={21} fill="#d01a78" />
              {serTicks.map(([x, w]) => (
                <rect key={x} x={x} y={989} width={w} height={21} fill="#0000b4" />
              ))}
            </Plot>
            <At frame={one} x={797} y={824} start className="text-[15px] font-bold">[0 - 100]</At>
            <At frame={one} x={2047} y={957} className="text-[30px]">LER</At>
            {serLabels.map((x) => (
              <At key={x} frame={one} x={x} y={1040} className="text-[30px]">
                SER
              </At>
            ))}
          </Pane>
          <div className="h-[11px] border-y-2 border-[#666] bg-[#fafafa]" />
          <Pane
            skin={big}
            tone="bg-white"
            height="h-[180px]"
            side={<Scroll thumb pad="pt-[13px] pb-[12px]" />}
            names={
              <>
                <Name h="h-[82px]" className="pl-[11px] text-[30px]">LR_sort.bam Coverage</Name>
                <Name h="flex-1" className="pl-[11px] text-[30px]">LR_sort.bam</Name>
              </>
            }
          >
            <div className="flex h-full flex-col border-t-2 border-[#c8c8c8]">
              <p className={`h-[82px] ${msg}`}>Zoom in to see coverage.</p>
              <p className={`flex-1 ${msg}`}>Zoom in to see alignments.</p>
            </div>
          </Pane>
          <div className="h-[10px] border-y-2 border-[#666] bg-[#fafafa]" />
          <Pane
            skin={big}
            tone="bg-white"
            height="h-[222px]"
            side={<Scroll thumb pad="pt-[14px] pb-[12px]" />}
            names={
              <>
                <Name h="h-[82px]" className="pl-[11px] text-[30px]">SR_sort.bam Coverage</Name>
                <Name h="flex-1" className="pl-[11px] text-[30px]">SR_sort.bam</Name>
              </>
            }
          >
            <div className="flex h-full flex-col border-t-2 border-[#c8c8c8]">
              <p className={`h-[84px] ${msg}`}>Zoom in to see coverage.</p>
              <p className={`flex-1 ${msg}`}>Zoom in to see alignments.</p>
            </div>
          </Pane>
          <div className="h-[10px] border-y-2 border-[#666] bg-[#fafafa]" />
          <div className="h-[3px] bg-[#ccc]" />
        </div>
      </div>
    </section>
  );
}

/* ---------- LER close-up ---------- */
function ViewerA() {
  const x0 = 423;
  const x1 = 2897.6;
  const head: Frame = { x0, x1, y0: 146.5, y1: 365.7 };
  const one: Frame = { x0, x1, y0: 369.7, y1: 509.8 };
  const lr: Frame = { x0, x1, y0: 517.8, y1: 1051 };
  const sr: Frame = { x0, x1, y0: 1060.8, y1: 1528.8 };
  const side = <div className="w-[7px] shrink-0 border-l border-[#bbb] bg-[#ececec]" />;
  const range = "text-[8px] font-bold text-[#222]";
  return (
    <section className="min-w-0 flex-[1154] border-l-3 border-[#8a8f98] text-[#333]">
      <MenuBar skin={smallA} underline />
      <Toolbar skin={smallA} locus="chr01:851,320-855,273" zoom={9} />
      <div className="h-[3px] bg-[#808080]" />
      <Pane skin={smallA} height="h-[111px]" side={side}>
        <Plot frame={head}>
          <rect x={425} y={173} width={2474} height={18} fill="#fff" stroke="#777" strokeWidth={2.5} />
          <rect x={2045} y={170} width={14} height={25} fill="#fff" stroke="#f00" strokeWidth={6} />
          <path d="M423 278H1588.600M1734.600 278H2897" stroke="#666" strokeWidth={2.5} />
          <path d="M426 278L447 273V283ZM2896 278L2874 273V283Z" fill="#000" />
          {[539, 849, 1160, 1476, 1787, 2099, 2414, 2725].map((x) => (
            <rect key={x} x={x - 1.5} y={330} width={3} height={15} fill="#555" />
          ))}
          <rect x={423} y={346} width={2475} height={20} fill="#a01010" />
          <rect x={423} y={348} width={2475} height={16} fill="#f00" />
        </Plot>
        <At frame={head} x={1659} y={279} className="text-[10px] font-bold text-black">3,955 bp</At>
        {([["852,000 bp", 848], ["853,000 bp", 1473], ["854,000 bp", 2098], ["855,000 bp", 2723]] as [string, number][]).map(([t, x]) => (
          <At key={t} frame={head} x={x} y={314} className="text-[8px] text-black">
            {t}
          </At>
        ))}
      </Pane>
      <div className="h-[2px] bg-[#777]" />
      <Pane
        skin={smallA}
        height="h-[71px]"
        side={side}
        names={
          <>
            <Name h="h-[34px]" className="pl-[4px] text-[12px]">out_regional.AQI.bdg</Name>
            <Name h="h-[33px]" className="pl-[4px] text-[12px]">out_final.LER.bed</Name>
          </>
        }
      >
        <Plot frame={one}>
          <rect x={x0} y={415} width={2475} height={3.5} fill="#86d2d2" />
          <rect x={x0} y={438} width={2475} height={2} fill="#eee" />
          <rect x={1392} y={450} width={6} height={17} fill="#ea94be" />
        </Plot>
        <At frame={one} x={433} y={381} start className={range}>[0 - 100]</At>
        <At frame={one} x={1391} y={493} className="text-[12px]">LER</At>
      </Pane>
      <div className="h-[4px] border-y border-[#aaa] bg-[#eee]" />
      <Pane
        skin={smallA}
        height="h-[270px]"
        side={side}
        names={
          <>
            <Name h="h-[33px]" className="pl-[4px] text-[13px]">LR_sort.bam Coverage</Name>
            <Name h="flex-1" className="pl-[4px] text-[13px]">LR_sort.bam</Name>
          </>
        }
      >
        <Plot frame={lr}>
          <Coverage
            base={585}
            pts={[[423, 524], [480, 520], [560, 523], [640, 524], [720, 526], [830, 524], [870, 529], [920, 532], [980, 538], [1050, 546], [1110, 550], [1140, 555], [1190, 560], [1230, 566], [1245, 562], [1262, 572], [1300, 571], [1350, 577], [1392, 582]]}
          />
          <Coverage
            base={585}
            pts={[[782, 582], [800, 580], [850, 575], [880, 566], [920, 558], [970, 552], [990, 547], [1455, 547]].map(([x, y]) => [x + A_OFF, y] as [number, number])}
          />
          <Bars
            base={585}
            items={[[454, 572, "g"], [473, 523, "b"], [747, 526, "r"], [783, 560, "t", "g"], [863, 530, "t", "g"], [946, 535, "t", "g"], [1030, 545, "t", "g"], [1096, 552, "o"], [1108, 560, "t", "g"]]}
          />
          <Mix a={1135} b={1183} top={560} base={585} tones={WARM} />
          <Mix a={1188} b={1226} top={561} base={585} tones={WARM} />
          <Mix a={1262} b={1276} top={571} base={585} tones={WARM} />
          <Mix a={1305} b={1388} top={577} base={585} tones={WARM} />
          <Bars
            base={585}
            off={A_OFF}
            items={[[808, 578, "g"], [852, 575, "r", "g"], [922, 560, "b"], [933, 556, "r"], [945, 556, "r", "b"], [957, 556, "g", "r"], [968, 555, "r", "b"], [1020, 564, "o", "g"], [1050, 551, "r", "g"], [1078, 550, "r", "b"], [1130, 553, "o"], [1167, 550, "r", "p"], [1184, 550, "r", "g"], [1250, 550, "r", "b"], [1264, 550, "r", "b"], [1279, 550, "r", "b"], [1309, 550, "r", "g"], [1320, 550, "r", "b"], [1363, 560, "r", "t"], [1378, 558, "r", "b"], [1425, 550, "r", "t"], [1430, 550, "o"]]}
          />
          <Mix a={2327} b={2345} top={566} base={585} tones={WARM} />
          <path d="M423 585H2898" stroke="#999" strokeWidth={2} />
          <PurpleBand y={599} h={14} segs={[[423, 1383], [2198, 2220], [2242, 2270], [2284, 2306], [2318, 2466], [2468, 2738], [2738, 2796], [2810, 2898]]} />
          <LongReads data={longA} h={20} />
          <path d="M495 1051H510M683 1051H697M1043 1051H1056" stroke={INS} strokeWidth={3} />
        </Plot>
        <At frame={lr} x={433} y={529} start className={range}>[0 - 38]</At>
      </Pane>
      <div className="h-[5px] border-b border-[#bbb] bg-[#d4d4d4]" />
      <Pane
        skin={smallA}
        height="h-[237px]"
        side={side}
        names={
          <>
            <Name h="h-[35px]" className="pl-[4px] text-[13px]">SR_sort.bam Coverage</Name>
            <Name h="flex-1" className="pl-[4px] text-[13px]">SR_sort.bam</Name>
          </>
        }
      >
        <Plot frame={sr}>
          <Coverage
            base={1130}
            pts={[[423, 1067], [500, 1067], [515, 1074], [540, 1081], [560, 1093], [600, 1084], [650, 1090], [700, 1087], [800, 1083], [880, 1085], [920, 1073], [1020, 1080], [1050, 1098], [1070, 1110], [1110, 1118], [1165, 1129]]}
          />
          <Coverage
            base={1130}
            pts={([[782, 1127], [850, 1118], [910, 1108], [950, 1096], [980, 1088], [1000, 1075], [1050, 1069], [1090, 1078], [1130, 1073], [1180, 1078], [1200, 1085], [1290, 1083], [1340, 1075], [1370, 1067], [1455, 1071]] as [number, number][]).map(([x, y]) => [x + A_OFF, y] as [number, number])}
          />
          <Bars base={1130} off={A_OFF} items={[[812, 1122, "t"], [835, 1120, "g"]]} />
          <path d="M423 1130.500H2898" stroke="#b5b5b5" strokeWidth={2} />
          <ShortReads rows={shortALeft} off={0} h={21} />
          <ShortReads rows={shortARight} off={A_OFF} h={21} />
          <path d="M423 1526H540M1012 1526H1175M2878 1526H2898" stroke={PINK} strokeWidth={6} />
          <path d="M542 1526H722M2351 1526H2512M2537 1526H2708" stroke={BLUE} strokeWidth={6} />
        </Plot>
        <At frame={sr} x={433} y={1074} start className={range}>[0 - 58]</At>
        <At frame={sr} x={433} y={1148} start className="text-[9px] text-[#222]">chr01</At>
      </Pane>
      <div className="h-[4px] border-b-2 border-[#bbb] bg-[#ddd]" />
    </section>
  );
}

/* ---------- SER close-up ---------- */
function ViewerB() {
  const x0 = 505;
  const x1 = 3025.6;
  const head: Frame = { x0, x1, y0: 176.2, y1: 452.6 };
  const one: Frame = { x0, x1, y0: 454.6, y1: 727.1 };
  const lr: Frame = { x0, x1, y0: 739, y1: 1128 };
  const sr: Frame = { x0, x1, y0: 1139.8, y1: 1528.8 };
  const side = <div className="w-[3px] shrink-0 bg-[#ddd]" />;
  const range = "text-[10px] font-bold text-[#222]";
  const shift = (pts: [number, number][]) => pts.map(([x, y]) => [x + B_OFF, y] as [number, number]);
  return (
    <section className="min-w-0 flex-[1206] border-l-3 border-[#a5a5a5] text-[#333]">
      <MenuBar skin={smallB} underline={false} />
      <Toolbar skin={smallB} locus="chr01:1,040,528-1,042,204" zoom={10} />
      <div className="h-[4px] bg-[#808080]" />
      <Pane skin={smallB} height="h-[140px]" side={side}>
        <Plot frame={head}>
          <rect x={507} y={211} width={2522} height={21} fill="#fff" stroke="#666" strokeWidth={3} />
          <rect x={2522} y={205} width={18} height={33} fill="#f00" />
          <path d="M505 341H1675M1857 341H3026" stroke="#444" strokeWidth={2} />
          <path d="M510 341L533 336V346ZM3022 341L2998 336V346Z" fill="#000" />
          {Array.from({ length: 17 }, (_, i) => (
            <rect key={i} x={613.5 + i * 150.3} y={405} width={3} height={18} fill="#555" />
          ))}
          <rect x={505} y={427} width={2521} height={26} fill="#801010" />
          <rect x={505} y={430} width={2521} height={19} fill="#f00" />
        </Plot>
        <At frame={head} x={1766} y={342} className="text-[13px] font-bold text-black">1,678 bp</At>
        {["1,040,600 bp", "1,040,800 bp", "1,041,000 bp", "1,041,200 bp", "1,041,400 bp", "1,041,600 bp", "1,041,800 bp", "1,042,000 bp", "1,042,200 bp"].map((t, i) => (
          <At key={t} frame={head} x={613 + i * 300.4} y={388} className="text-[10px] text-black">
            {t}
          </At>
        ))}
      </Pane>
      <div className="h-px bg-[#777]" />
      <Pane
        skin={smallB}
        height="h-[138px]"
        side={side}
        names={
          <>
            <Name h="h-[42px]" className="pl-[5px] text-[15px]">out_regional.AQI.bdg</Name>
            <Name h="h-[44px]" className="pl-[5px] text-[15px]">out_final.LER.bed</Name>
            <Name h="h-[44px]" className="pl-[5px] text-[15px]">out_final.SER.bed</Name>
          </>
        }
      >
        <Plot frame={one}>
          <rect x={x0} y={478} width={2521} height={4} fill="#63c2c2" />
          <path d="M505 543H3026M505 630H3026M505 716H3026" stroke="#eee" strokeWidth={2} />
          <rect x={2047} y={643} width={4} height={21} fill="#7a7ad0" />
        </Plot>
        <At frame={one} x={516} y={471} start className={range}>[0 - 100]</At>
        <At frame={one} x={2046} y={696} className="text-[16px]">SER</At>
      </Pane>
      <div className="h-[6px] border-y border-[#999] bg-[#fafafa]" />
      <Pane
        skin={smallB}
        height="h-[197px]"
        side={side}
        names={
          <>
            <Name h="h-[42px]" className="pl-[5px] text-[16px]">LR_sort.bam Coverage</Name>
            <Name h="flex-1" className="pl-[5px] text-[16px]">LR_sort.bam</Name>
          </>
        }
      >
        <Plot frame={lr}>
          <Coverage
            base={825}
            pts={[[505, 743], [700, 741], [750, 740], [900, 742], [1000, 741], [1100, 748], [1150, 753], [1210, 752], [1300, 755], [1380, 764], [1480, 768], [1560, 766], [1590, 770], [1605, 782], [1640, 796], [1700, 794], [1780, 788], [1830, 785], [1890, 788], [1940, 796], [2010, 796], [2070, 790], [2090, 776], [2150, 768], [2210, 764], [2250, 757], [2340, 755], [2390, 757], [2450, 752], [2530, 747], [2670, 743], [2820, 745], [3026, 744]]}
          />
          <Bars
            base={825}
            items={[[533, 746, "b"], [697, 742, "r", "r"], [749, 745, "b"], [757, 742, "r", "b"], [923, 755, "t", "g"], [962, 745, "t", "g"], [1042, 755, "r"], [1070, 744, "t", "g"], [1110, 750, "r", "g"], [1211, 754, "t"], [1308, 756, "r", "p"], [1366, 762, "r", "g"], [1430, 768, "t", "b"], [1438, 768, "r", "b"], [1462, 770, "r", "p"]]}
          />
          <Mix a={1510} b={1528} top={768} base={825} />
          <Mix a={1538} b={1549} top={768} base={825} />
          <Mix a={1560} b={1571} top={775} base={825} />
          <Mix a={1580} b={1604} top={775} base={825} />
          <path d="M1600 786L1640 797L1700 795L1760 791L1810 788V825H1600Z" fill="#d87200" />
          <path d="M1600 776L1612 786L1640 796L1700 794L1760 790L1810 787V794L1760 798L1700 800L1640 806L1600 806Z" fill="#e01808" />
          <path d="M1694 822H1795" stroke="#5a50c0" strokeWidth={4} />
          <path d="M1833 790V825" stroke={MARK.t} strokeWidth={5} />
          <Mix a={1892} b={1928} top={792} base={825} />
          <Mix a={1938} b={1962} top={793} base={825} />
          <Mix a={1972} b={1980} top={793} base={825} />
          <Mix a={1988} b={2070} top={793} base={825} />
          <Bars
            base={825}
            off={B_OFF}
            items={[[587, 788, "r"], [611, 777, "b", "r"], [624, 772, "r", "g"], [682, 771, "r"], [710, 768, "r", "p"], [724, 768, "o", "g"], [733, 758, "r", "t"], [752, 766, "o", "b"], [806, 776, "t", "g"], [814, 757, "r"], [833, 768, "g", "b"], [904, 756, "r"], [973, 765, "o", "t"], [1026, 752, "r", "g"], [1229, 745, "r", "b"], [1260, 770, "r", "b"], [1314, 750, "r", "b"], [1325, 753, "b"]]}
          />
          <PurpleBand y={839} h={18} segs={[[505, 655], [655, 712], [722, 1380], [1398, 1622], [1644, 1674], [1734, 1764], [1876, 1908], [1930, 2200], [2204, 2458], [2484, 2583], [2590, 2926], [2926, 2960], [2960, 3026]]} />
          <path d="M1348 876H1415M1478 876H1555M1618 876H1872M1935 876H2198M1538 906H1570M1602 906H1805M1868 906H2075" stroke="#222" strokeWidth={3} />
          <LongReads data={longB} h={25} />
          <rect x={1620} y={1014} width={74} height={25} fill={INS} />
          <rect x={1727} y={1014} width={41} height={25} fill="#f83030" />
        </Plot>
        <At frame={lr} x={516} y={752} start className={range}>[0 - 36]</At>
        <At frame={lr} x={1447} y={877} className="text-[10px] text-[#7b1fe0]">138</At>
        <At frame={lr} x={1904} y={877} className="text-[10px] text-[#7b1fe0]">397</At>
        <At frame={lr} x={1837} y={907} className="text-[10px] text-[#7b1fe0]">313</At>
        <At frame={lr} x={1656} y={1027} className="text-[10px] text-white">548</At>
      </Pane>
      <div className="h-[6px] border-y border-[#999] bg-[#fafafa]" />
      <Pane
        skin={smallB}
        height="h-[197px]"
        side={side}
        names={
          <>
            <Name h="h-[44px]" className="pl-[5px] text-[16px]">SR_sort.bam Coverage</Name>
            <Name h="flex-1" className="pl-[5px] text-[16px]">SR_sort.bam</Name>
          </>
        }
      >
        <Plot frame={sr}>
          <Coverage
            base={1228}
            pts={[[505, 1144], [600, 1144], [680, 1148], [730, 1163], [800, 1161], [850, 1163], [930, 1173], [1010, 1169], [1070, 1180], [1160, 1178], [1190, 1184], [1220, 1192], [1260, 1194], [1320, 1205], [1400, 1213], [1470, 1217], [1530, 1224], [1585, 1227]]}
          />
          <Coverage
            base={1228}
            pts={shift([[553, 1212], [610, 1203], [660, 1194], [715, 1186], [730, 1188], [800, 1181], [830, 1178], [850, 1169], [960, 1172], [1020, 1169], [1100, 1168], [1150, 1173], [1190, 1169], [1240, 1168], [1270, 1163], [1310, 1157], [1350, 1162], [1440, 1158], [1500, 1162], [1536, 1156]])}
          />
          <path d="M505 1228.500H3026" stroke="#a8a8a8" strokeWidth={2.5} />
          <ShortReads rows={shortBLeft} off={0} h={26} />
          <ShortReads rows={shortBRight} off={B_OFF} h={26} />
        </Plot>
        <At frame={sr} x={516} y={1156} start className={range}>[0 - 53]</At>
        <At frame={sr} x={516} y={1249} start className="text-[11px] text-[#222]">chr01</At>
      </Pane>
      <div className="h-[2px] bg-[#ccc]" />
    </section>
  );
}

/* ---------- annotations ---------- */
function Callout({ box, w, h, tipX, tipY, from, to, r, children }: { box: string; w: number; h: number; tipX: number; tipY: number; from: number; to: number; r: number; children: ReactNode }) {
  return (
    <div className={`relative shrink-0 text-[31px] leading-[38px] ${box}`}>
      <svg className="absolute top-0 left-0 z-10 h-full w-full overflow-visible" viewBox={`0 0 ${w} ${h}`} aria-hidden="true">
        <path
          d={`M${r} 1H${w - r}Q${w - 1} 1 ${w - 1} ${Math.min(r, from)}V${from}L${tipX} ${tipY}L${w - 1} ${to}V${Math.max(h - r, to)}Q${w - 1} ${h - 1} ${w - r} ${h - 1}H${r}Q1 ${h - 1} 1 ${h - r}V${r}Q1 1 ${r} 1Z`}
          fill="#a9d18e"
          stroke="#000"
          strokeWidth="3"
          strokeDasharray="3 3"
        />
      </svg>
      <div className="relative z-20 whitespace-nowrap">{children}</div>
    </div>
  );
}

export default function App() {
  return (
    <main className="relative min-h-screen w-full overflow-hidden bg-white text-black [font-family:'Liberation_Sans',Arial,sans-serif]">
      <h1 className="pt-[203px] pl-[636px] text-[84px] leading-[96px] whitespace-pre italic">Step1: Load your genome.fa &amp; CRAQ output</h1>
      <div className="flex pt-[53px] pr-[92px]">
        <aside className="flex w-[422px] shrink-0">
          <div className="flex w-[84px] flex-col pt-[630px] pl-[3px]">
            <p className="rotate-180 text-[56px] leading-[68px] whitespace-nowrap text-[#c00000] [writing-mode:vertical-rl]">Craq output</p>
          </div>
          <svg className="mt-[490px] h-[598px] w-[48px] shrink-0" viewBox="0 0 48 598" fill="none" aria-hidden="true">
            <path d="M44 4C20 4 12 5 2 7V589C12 593 24 594 44 595" stroke="#000" strokeWidth="3" />
          </svg>
          <div className="flex flex-col pt-[123px]">
            <Callout box="w-[246px] h-[90px] pt-[11px] pl-[19px] text-[#c00000]" w={246} h={90} tipX={390} tipY={-35} from={15} to={35} r={12}>
              Your genome
              <br />
              <span className="pl-[88px]">(.fa)</span>
            </Callout>
            <Callout box="ml-[3px] mt-[202px] w-[244px] h-[114px] pt-[42px] pl-[17px]" w={244} h={114} tipX={273} tipY={81} from={67} to={94} r={18}>
              Regional AQI
            </Callout>
            <Callout box="ml-[3px] mt-[25px] w-[244px] h-[82px] pt-[21px] pl-[19px]" w={244} h={82} tipX={273} tipY={24} from={13} to={34} r={14}>
              LER location
            </Callout>
            <Callout box="ml-[3px] mt-[18px] w-[244px] h-[82px] pt-[28px] pl-[20px]" w={244} h={82} tipX={273} tipY={23} from={14} to={34} r={14}>
              SER location
            </Callout>
            <Callout box="ml-[2px] mt-[41px] w-[243px] h-[142px] pt-[13px] pl-[17px]" w={243} h={142} tipX={273} tipY={41} from={25} to={59} r={22}>
              Long-reads
              <br />
              alignment
              <br />
              (sort.bam)
            </Callout>
            <Callout box="mt-[56px] w-[243px] h-[141px] pt-[20px] pl-[26px]" w={243} h={141} tipX={273} tipY={41} from={25} to={59} r={22}>
              Short-reads
              <br />
              alignment
              <br />
              (sort.bam)
            </Callout>
          </div>
        </aside>
        <MainViewer />
      </div>
      <h1 className="pt-[96px] pl-[709px] text-[84px] leading-[96px] whitespace-pre italic">Step2 : Zoom  to check the mapping status</h1>
      <div className="flex items-start gap-[52px] pt-[49px] pr-[41px] pl-[383px]">
        <ViewerA />
        <ViewerB />
      </div>
      <svg className="pointer-events-none absolute top-0 left-0 z-30 w-full" viewBox="0 0 2836 4096" aria-hidden="true">
        <path d="M2044.500 779V1078M2053.500 779V1078M2324.500 779V1078M2333.500 779V1078" stroke="#000" strokeWidth="1" />
        <path d="M2042 1083L2055 1094L1510 1683L1551 1686L1467 1718L1491 1633L1499 1671Z" fill="#c00000" />
        <path d="M2320 1076L2337 1077L2307 1632L2339 1610L2296 1687L2260 1605L2289 1630Z" fill="#c00000" />
        <path d="M929.500 1976V2263M2391 2307V2502" stroke="#000" strokeWidth="6" strokeDasharray="21 14.300" />
      </svg>
    </main>
  );
}
